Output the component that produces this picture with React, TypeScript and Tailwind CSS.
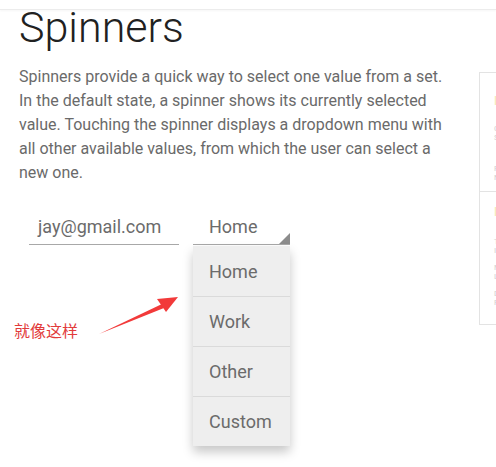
import React from "react";

const OPTIONS = ["Home", "Work", "Other", "Custom"];

function SpinnerField() {
  return (
    <div className="relative">
      <div className="relative w-[97px] h-[32px] border-b border-[#a8a8a8] pl-4 text-[18px] leading-[28px] text-[#6b6b6b]">
        Home
        <svg className="absolute right-0 bottom-0" width="11" height="11" viewBox="0 0 11 11">
          <polygon points="11,0 11,11 0,11" fill="#8c8c8c" />
        </svg>
      </div>
      <ul className="absolute left-0 top-[33px] w-[97px] bg-[#eeeeee] shadow-[0_6px_10px_rgba(0,0,0,0.22)] z-10">
        {OPTIONS.map((opt, i) => (
          <li
            key={opt}
            className={
              "h-[50px] pl-4 flex items-center text-[18px] text-[#6b6b6b] " +
              (i > 0 ? "border-t border-[#dadada]" : "")
            }
          >
            {opt}
          </li>
        ))}
      </ul>
    </div>
  );
}

function SideItem({ a, b }: { a: string; b: string }) {
  return (
    <div className="text-[8px] leading-[9px] text-[#d2d2d2]">
      <div>{a}</div>
      <div>{b}</div>
    </div>
  );
}

export default function App() {
  return (
    <div className="relative w-[496px] h-[467px] overflow-hidden bg-white font-['Roboto','Liberation_Sans',sans-serif]">
      <div className="h-[10px] border-b border-[#ececec] shadow-[0_1px_2px_rgba(0,0,0,0.04)]" />

      <div className="flex">
        <div className="w-[460px] shrink-0 pl-[19px]">
          <h1 className="-mt-[5px] text-[43px] leading-[44px] font-light text-[#212121]">Spinners</h1>
          <p className="mt-4 w-[430px] text-[16px] leading-[24px] text-[#6a6a6a]">
            Spinners provide a quick way to select one value from a set. In the default state, a spinner shows its
            currently selected value. Touching the spinner displays a dropdown menu with all other available values,
            from which the user can select a new one.
          </p>

          <div className="mt-[28px] ml-[10px] flex items-start gap-[14px]">
            <div className="w-[150px] h-[32px] border-b border-[#a8a8a8] pl-[9px] text-[18px] leading-[28px] text-[#6b6b6b]">
              jay@gmail.com
            </div>
            <SpinnerField />
          </div>
        </div>

        <aside className="ml-[19px] mt-[62px] w-[200px] h-[253px] shrink-0 border border-[#e3e3e3] flex flex-col">
          <div className="h-[119px] border-b border-[#e3e3e3] pl-[14px] pt-[21px]">
            <div className="text-[13px] leading-[14px] text-[#f6ebbf] font-medium">Material</div>
            <div className="mt-[16px] flex flex-col gap-[22px]">
              <SideItem a="Components" b="Spinners" />
              <SideItem a="Patterns" b="Navigation" />
            </div>
          </div>
          <div className="flex-1 pl-[14px] pt-[13px]">
            <div className="text-[13px] leading-[14px] text-[#f6ebbf] font-medium">Related</div>
            <div className="mt-[18px] flex flex-col gap-[8px]">
              <SideItem a="Text fields" b="Input" />
              <SideItem a="Menus" b="Lists" />
              <SideItem a="Dialogs" b="Pickers" />
            </div>
          </div>
        </aside>
      </div>

      {/* annotation */}
      <span className="absolute left-[14px] top-[320px] text-[16px] leading-[20px] text-[#e23b3b] font-['Noto_Sans_CJK_SC',sans-serif]">
        就像这样
      </span>
      <svg className="absolute left-0 top-0 pointer-events-none" width="496" height="467" viewBox="0 0 496 467">
        <polygon points="99,334 162,304 164,308" fill="#f23a3a" />
        <polygon points="178,297 157,299 166,312" fill="#f23a3a" />
      </svg>
    </div>
  );
}
